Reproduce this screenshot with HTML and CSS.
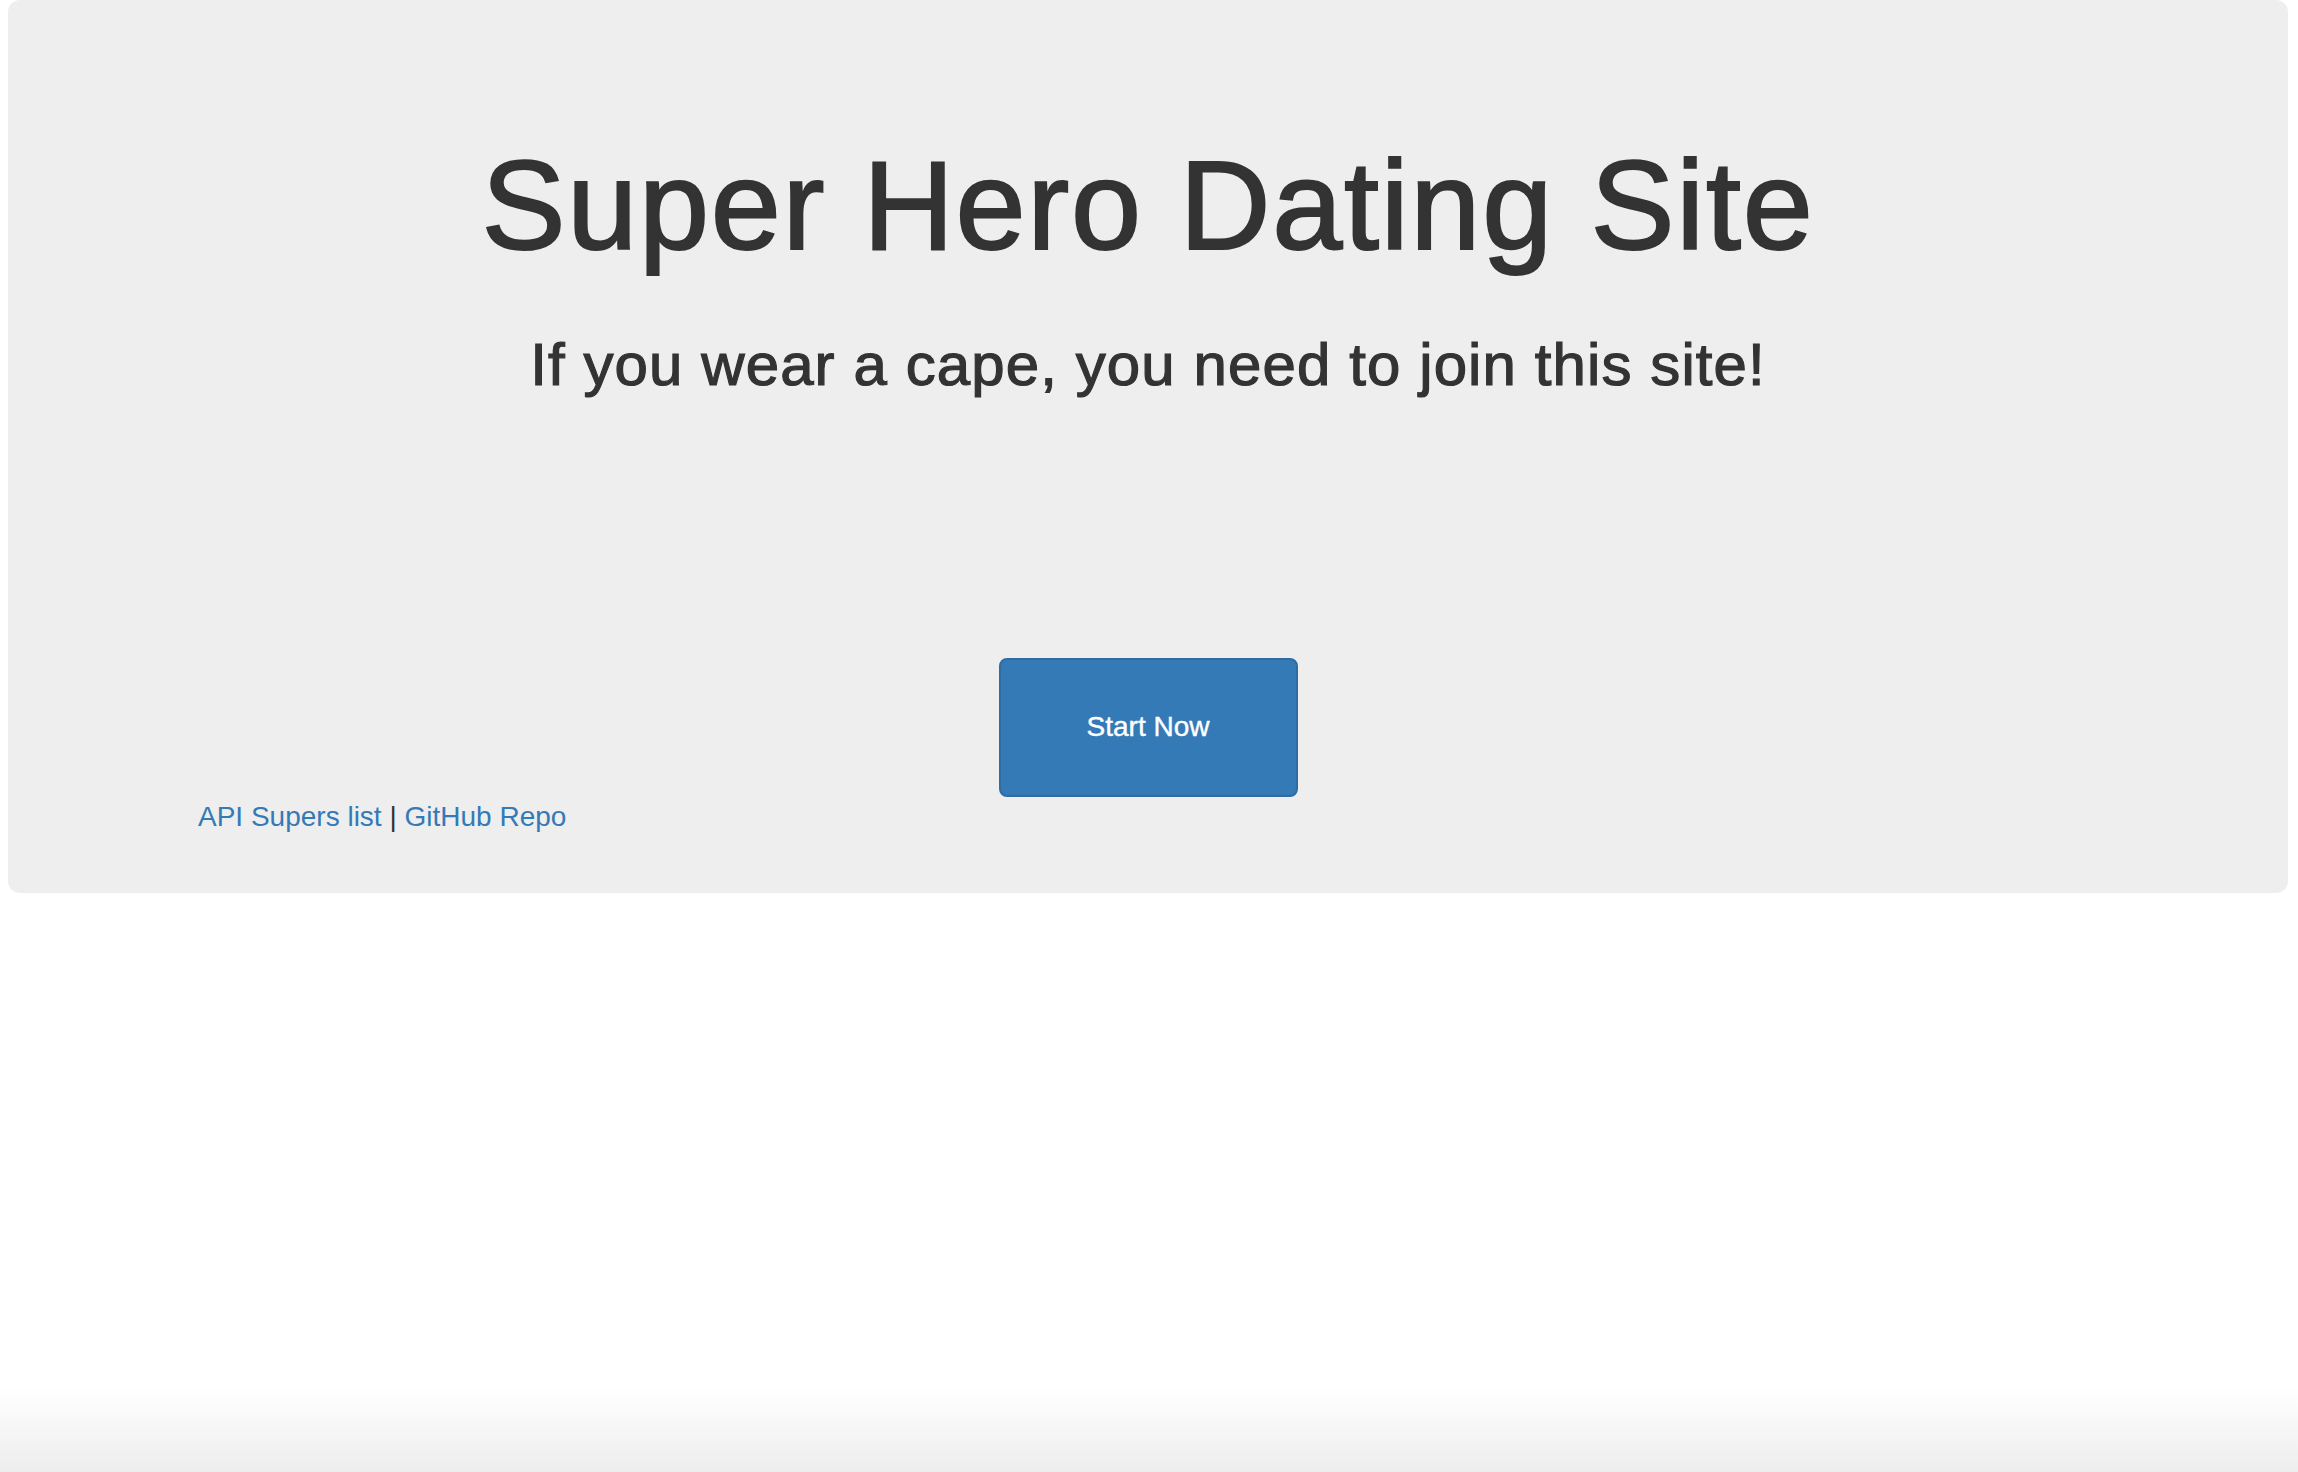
FILE: index.html
```html
<!DOCTYPE html>
<html>
<head>
<meta charset="utf-8">
<title>Super Hero Dating Site</title>
<link rel="stylesheet" href="styles.css">
</head>
<body>
<div class="jumbotron">
  <h1 class="title">Super Hero Dating Site</h1>
  <h2 class="subtitle">If you wear a cape, you need to join this site!</h2>
  <div class="actions">
    <a class="btn" href="#">Start Now</a>
  </div>
  <p class="links"><a href="#">API Supers list</a> | <a href="#">GitHub Repo</a></p>
</div>
<div class="bottom-fade"></div>
</body>
</html>
```
FILE: styles.css
```css
html, body {
  margin: 0;
  padding: 0;
  background: #fff;
}
body {
  font-family: "Liberation Sans", Arial, Helvetica, sans-serif;
  color: #333;
  height: 1472px;
  overflow: hidden;
}
.jumbotron {
  margin: 0 10px 0 8px;
  background: #eeeeee;
  border-radius: 12px;
  padding: 137px 0 56px 0;
  display: flex;
  flex-direction: column;
}
.title {
  margin: 0;
  font-size: 126px;
  font-weight: 500;
  line-height: 1.1;
  text-align: center;
  color: #333;
  letter-spacing: 1.7px;
  -webkit-text-stroke: 2px #333;
}
.subtitle {
  margin: 56px 0 0 0;
  font-size: 60px;
  font-weight: 500;
  line-height: 1.1;
  text-align: center;
  color: #333;
  letter-spacing: 1.1px;
  -webkit-text-stroke: 1.2px #333;
}
.actions {
  margin-top: 260px;
  display: flex;
  justify-content: center;
}
.btn {
  box-sizing: border-box;
  width: 299px;
  height: 139px;
  display: flex;
  align-items: center;
  justify-content: center;
  background: #337ab7;
  border: 2px solid #2e6da4;
  border-radius: 8px;
  color: #fff;
  font-size: 28px;
  text-decoration: none;
  -webkit-text-stroke: 0.4px #fff;
}
.links {
  margin: 0 0 0 190px;
  font-size: 28px;
  line-height: 40px;
  color: #333;
}
.links a {
  color: #337ab7;
  text-decoration: none;
}
.bottom-fade {
  position: fixed;
  left: 0;
  right: 0;
  bottom: 0;
  height: 84px;
  background: linear-gradient(to bottom, rgba(237,237,237,0), rgba(237,237,237,1));
  pointer-events: none;
}
```
